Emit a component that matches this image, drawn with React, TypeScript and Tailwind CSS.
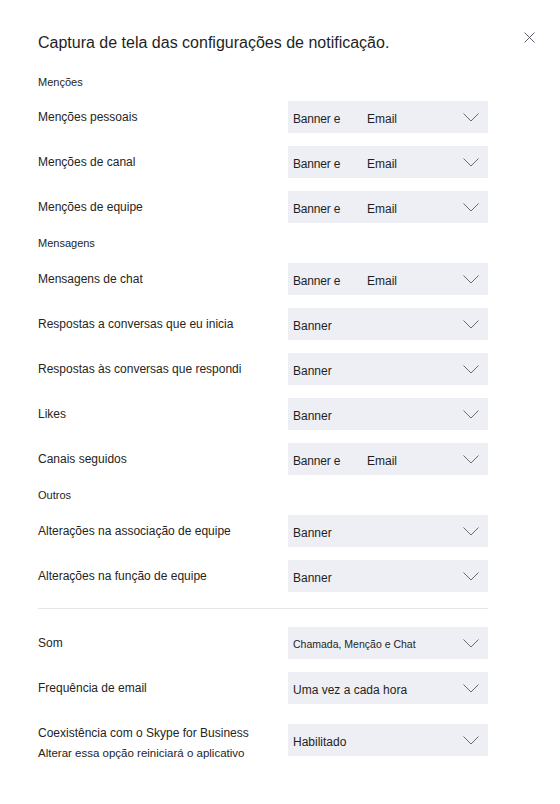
import React from 'react';

type Row = { label: string; value: string; email?: boolean; small?: boolean };

const sections: { title: string; rows: Row[] }[] = [
  {
    title: 'Menções',
    rows: [
      { label: 'Menções pessoais', value: 'Banner e', email: true },
      { label: 'Menções de canal', value: 'Banner e', email: true },
      { label: 'Menções de equipe', value: 'Banner e', email: true },
    ],
  },
  {
    title: 'Mensagens',
    rows: [
      { label: 'Mensagens de chat', value: 'Banner e', email: true },
      { label: 'Respostas a conversas que eu inicia', value: 'Banner' },
      { label: 'Respostas às conversas que respondi', value: 'Banner' },
      { label: 'Likes', value: 'Banner' },
      { label: 'Canais seguidos', value: 'Banner e', email: true },
    ],
  },
  {
    title: 'Outros',
    rows: [
      { label: 'Alterações na associação de equipe', value: 'Banner' },
      { label: 'Alterações na função de equipe', value: 'Banner' },
    ],
  },
];

const Chevron = () => (
  <svg width="16" height="9" viewBox="0 0 16 9" fill="none" className="shrink-0">
    <path d="M0.5 0.5L8 8L15.5 0.5" stroke="#6b6b6b" strokeWidth="1" />
  </svg>
);

const Select: React.FC<{ row: Row }> = ({ row }) => (
  <div className="w-[200px] h-[32px] bg-[#edeff4] flex items-center pl-[5px] pr-[9px] shrink-0">
    <div className={`flex-1 flex items-center pt-[3px] text-[#1f1f1f] ${row.small ? 'text-[10.5px]' : 'text-[12px]'}`}>
      <span className={row.email ? 'w-[74px] tracking-[-0.2px]' : ''}>{row.value}</span>
      {row.email && <span>Email</span>}
    </div>
    <Chevron />
  </div>
);

const SettingRow: React.FC<{ row: Row; className?: string }> = ({ row, className }) => (
  <div className={`flex items-center justify-between h-[32px] ${className ?? ''}`}>
    <span className="text-[12px] text-[#252423] -mt-[1px]">{row.label}</span>
    <Select row={row} />
  </div>
);

export default function App() {
  return (
    <div
      className="relative w-[560px] h-[804px] bg-white px-[38px] pr-[72px]"
      style={{ fontFamily: '"Liberation Sans", Arial, sans-serif' }}
    >
      <button className="absolute right-[25px] top-[31px] w-[12px] h-[12px] flex items-center justify-center">
        <svg width="11" height="11" viewBox="0 0 11 11" fill="none">
          <path d="M0.5 0.5L10.5 10.5M10.5 0.5L0.5 10.5" stroke="#5b5f6b" strokeWidth="1" />
        </svg>
      </button>

      <h1 className="pt-[31px] text-[16px] leading-[24px] text-[#1f1f1f] font-normal">
        Captura de tela das configurações de notificação.
      </h1>

      {sections.map((s, si) => (
        <div key={s.title}>
          <div className={`text-[11px] leading-[16px] text-[#252423] ${si === 0 ? 'mt-[19px]' : 'mt-[12px]'}`}>
            {s.title}
          </div>
          {s.rows.map((r, i) => (
            <SettingRow
              key={r.label}
              row={r}
              className={i === 0 ? (si === 0 ? 'mt-[11px]' : 'mt-[12px]') : 'mt-[13px]'}
            />
          ))}
        </div>
      ))}

      <div className="mt-[16px] h-px bg-[#e6e6e6]" />

      <SettingRow row={{ label: 'Som', value: 'Chamada, Menção e Chat', small: true }} className="mt-[18px]" />
      <SettingRow row={{ label: 'Frequência de email', value: 'Uma vez a cada hora' }} className="mt-[13px]" />

      <div className="flex items-start justify-between mt-[20px]">
        <div className="text-[12px] leading-[20px] text-[#252423] -mt-[1px]">
          <div>Coexistência com o Skype for Business</div>
          <div className="text-[11.5px]">Alterar essa opção reiniciará o aplicativo</div>
        </div>
        <Select row={{ label: '', value: 'Habilitado' }} />
      </div>
    </div>
  );
}
